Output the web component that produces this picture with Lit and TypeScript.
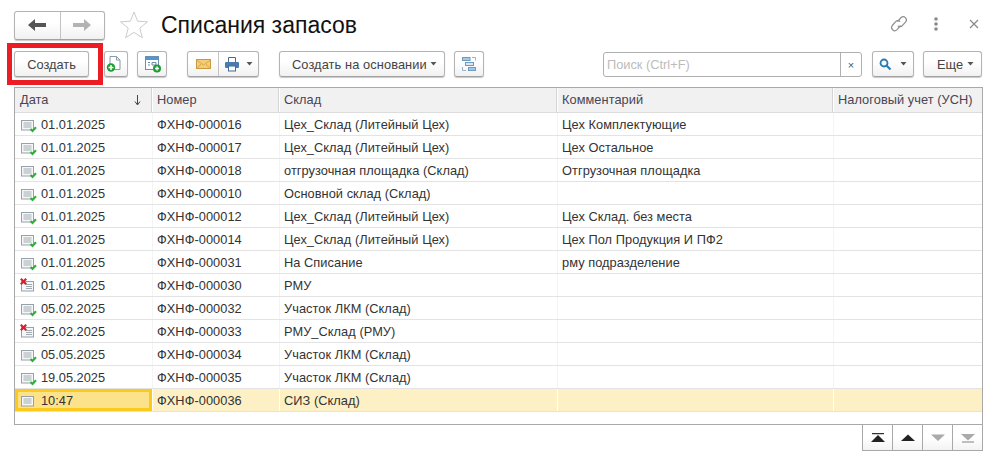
import { LitElement, html, css, svg } from "lit";
import { customElement } from "lit/decorators.js";

type Row = [number, string, string, string, string];
const rows: Row[] = [
  [1, "01.01.2025", "ФХНФ-000016", "Цех_Склад (Литейный Цех)", "Цех Комплектующие"],
  [1, "01.01.2025", "ФХНФ-000017", "Цех_Склад (Литейный Цех)", "Цех Остальное"],
  [1, "01.01.2025", "ФХНФ-000018", "отгрузочная площадка (Склад)", "Отгрузочная площадка"],
  [1, "01.01.2025", "ФХНФ-000010", "Основной склад (Склад)", ""],
  [1, "01.01.2025", "ФХНФ-000012", "Цех_Склад (Литейный Цех)", "Цех Склад. без места"],
  [1, "01.01.2025", "ФХНФ-000014", "Цех_Склад (Литейный Цех)", "Цех Пол Продукция И ПФ2"],
  [1, "01.01.2025", "ФХНФ-000031", "На Списание", "рму подразделение"],
  [2, "01.01.2025", "ФХНФ-000030", "РМУ", ""],
  [1, "05.02.2025", "ФХНФ-000032", "Участок ЛКМ (Склад)", ""],
  [2, "25.02.2025", "ФХНФ-000033", "РМУ_Склад (РМУ)", ""],
  [1, "05.05.2025", "ФХНФ-000034", "Участок ЛКМ (Склад)", ""],
  [1, "19.05.2025", "ФХНФ-000035", "Участок ЛКМ (Склад)", ""],
];

const docIcon = (state: number) => svg`<svg class="doc" width="20" height="16" viewBox="0 0 20 16">
  <rect x="1.5" y="3.5" width="12" height="9.5" fill="#f4f6f7" stroke="#97a1a9"/>
  <path d="${state === 2 ? "M6 6.5h6M6 8.5h6M6 10.5h6" : "M3.5 6h8M3.5 8h8M3.5 10h8"}" stroke="#a3abb1" fill="none"/>
  ${state === 1 ? svg`<path d="M10.5 12l2 2 3.5-3.8" stroke="#2fae3a" stroke-width="2" fill="none"/>` : ""}
  ${state === 2 ? svg`<path d="M.8 .8l5.4 5.4M6.2 .8L.8 6.2" stroke="#d8202c" stroke-width="2.2" fill="none"/>` : ""}
</svg>`;

const caret = html`<svg class="caret" width="7" height="4" viewBox="0 0 7 4"><path d="M.5 0h6L3.5 3.5z" fill="#555"/></svg>`;

@customElement("app-root")
export class AppRoot extends LitElement {
  static styles = css`
    :host { display: block; width: 1002px; height: 466px; background: #fff; font: 12.8px "Liberation Sans", Arial, sans-serif; color: #333; position: relative; overflow: hidden; }
    .page { display: flex; flex-direction: column; padding: 10px 19px 0 14px; }
    .head { display: flex; align-items: center; height: 30px; }
    .btn { display: inline-flex; align-items: center; justify-content: center; box-sizing: border-box; height: 26px; border: 1px solid #b4b4b4; border-bottom-color: #a2a2a2; border-radius: 3px; background: linear-gradient(#fff 40%, #f1f1f1); box-shadow: 0 1px 1px #c8c8c8; color: #444; white-space: nowrap; }
    .nav { display: flex; width: 91px; height: 29px; }
    .nav span { display: flex; align-items: center; justify-content: center; height: 100%; width: 45px; }
    .nav span + span { border-left: 1px solid #c4c4c4; width: 44px; }
    .star { margin-left: 14px; display: block; }
    h1 { margin: 0 0 0 12px; font-size: 23px; font-weight: 400; color: #111; line-height: 30px; flex: 1; }
    .tools { display: flex; align-items: center; padding-right: 4px; margin-top: -2px; }
    .tools svg { display: block; }
    .tools .dots { margin-left: 25px; }
    .tools .close { margin-left: 31px; }
    .bar { display: flex; align-items: center; margin-top: 11px; height: 26px; }
    .bar svg { overflow: visible; }
    .new { width: 75px; }
    .b2 { width: 24px; margin-left: 15px; }
    .b3 { width: 30px; margin-left: 9px; }
    .group { width: 72px; margin-left: 20px; padding: 0; }
    .group span { display: flex; align-items: center; justify-content: center; height: 100%; }
    .group .m { width: 30px; border-right: 1px solid #c4c4c4; }
    .group .p { flex: 1; gap: 6px; }
    .based { width: 166px; margin-left: 20px; gap: 3px; justify-content: flex-start; padding-left: 12px; letter-spacing: .1px; }
    .b6 { width: 30px; margin-left: 9px; }
    .search { display: flex; width: 259px; height: 25px; margin-left: 119px; align-self: flex-end; box-sizing: border-box; border: 1px solid #b0b0b0; border-radius: 3px; background: #fff; }
    .search .ph { flex: 1; padding-left: 3px; line-height: 23px; color: #bcbcbc; }
    .search .x { width: 20px; border-left: 1px solid #b0b0b0; display: flex; align-items: center; justify-content: center; color: #555; font-size: 11px; }
    .b8 { width: 42px; margin-left: 10px; gap: 8px; }
    .more { width: 59px; margin-left: 9px; gap: 4px; justify-content: flex-start; padding-left: 13px; }
    .table { margin-top: 10px; height: 338px; box-sizing: border-box; border: 1px solid #a8a8a8; }
    .row { display: grid; grid-template-columns: 137px 127px 278px 276px 1fr; height: 23px; box-sizing: border-box; border-bottom: 1px solid #e3e3e3; }
    .row > div { padding-left: 4px; line-height: 24px; white-space: nowrap; overflow: hidden; letter-spacing: .05px; }
    .row > div + div { border-left: 1px solid #f4f4f4; }
    .row.top { height: 25px; background: #f1f1f1; border-bottom: 1px solid #dcdcdc; color: #4b4453; }
    .row.top > div { line-height: 24px; }
    .row.top > div + div { border-left: 1px solid #fff; box-shadow: -1px 0 0 #d4d4d4; }
    .row.top .date { display: flex; justify-content: space-between; padding-left: 5px; padding-right: 11px; align-items: center; }
    .row > .first { display: flex; align-items: center; padding-left: 5px; padding-top: 2px; box-sizing: border-box; letter-spacing: 0; line-height: 20px; }
    .doc { flex: none; margin-right: 1px; }
    .row.sel { background: #fdf0c4; }
    .row.sel > div + div { border-left: 1px solid #fff; }
    .row.sel > .first { background: #fde28c; outline: 3px solid #fcc91d; outline-offset: -3px; }
    .pager { align-self: flex-end; display: flex; height: 26px; box-sizing: border-box; border: 1px solid #a8a8a8; border-top: 0; background: linear-gradient(#fff 50%, #f3f3f3); }
    .pager span { width: 29px; display: flex; align-items: center; justify-content: center; }
    .pager span + span { border-left: 1px solid #a8a8a8; }
    .mark { position: absolute; left: 7px; top: 43px; width: 96px; height: 42px; box-sizing: border-box; border: 5px solid #ec1c24; pointer-events: none; }
  `;

  render() {
    return html`
      <div class="page">
        <div class="head">
          <div class="btn nav">
            <span><svg width="18" height="14" viewBox="0 0 18 14"><path d="M0 7l7-6v4h11v4H7v4z" fill="#555"/></svg></span>
            <span><svg width="18" height="14" viewBox="0 0 18 14"><path d="M18 7l-7-6v4H0v4h11v4z" fill="#b3b3b3"/></svg></span>
          </div>
          <svg class="star" width="30" height="30" viewBox="0 0 30 30"><path d="M15 2l3.6 9.2 9.9.6-7.7 6.3 2.5 9.6-8.3-5.3-8.3 5.3 2.5-9.6L1.5 11.8l9.9-.6z" fill="#fff" stroke="#c9cdd1"/></svg>
          <h1>Списания запасов</h1>
          <div class="tools">
            <svg width="20" height="20" viewBox="0 0 20 20" fill="none" stroke="#8f8f8f" stroke-width="1.2"><path d="M8.5 7.5l3.6-4a3.2 3.2 0 0 1 4.6 4.4l-3.4 3.8a3 3 0 0 1-4.4.1"/><path d="M11.5 11.5l-3.6 4.4a3.2 3.2 0 0 1-4.6-4.4l3.4-3.8a3 3 0 0 1 4.4-.1"/></svg>
            <svg class="dots" width="4" height="16" viewBox="0 0 4 16"><g fill="#8a8a8a"><circle cx="2" cy="3" r="1.8"/><circle cx="2" cy="8" r="1.8"/><circle cx="2" cy="13" r="1.8"/></g></svg>
            <svg class="close" width="10" height="10" viewBox="0 0 10 10"><path d="M1 1l8 8M9 1L1 9" stroke="#888" stroke-width="1.2"/></svg>
          </div>
        </div>
        <div class="bar">
          <div class="btn new">Создать</div>
          <div class="btn b2"><svg width="18" height="20" viewBox="2 0 18 20"><path d="M5 2.5h6.5l3.5 3.5v9.5H5z" fill="#fff" stroke="#8a9aa8"/><path d="M11.5 2.5V6H15" fill="none" stroke="#8a9aa8"/><circle cx="6" cy="13.5" r="4.2" fill="#1f9d35"/><path d="M6 11v5M3.5 13.5h5" stroke="#fff" stroke-width="1.5"/></svg></div>
          <div class="btn b3"><svg width="20" height="20" viewBox="0 0 20 20"><rect x="3.5" y="2.5" width="13" height="13" fill="#fff" stroke="#6d8faf"/><rect x="4" y="3" width="12" height="3" fill="#4a9ad8"/><path d="M6 8.5h2M6 11h2M10 8.5h4v2.5h-4z" fill="none" stroke="#6d8faf"/><circle cx="15" cy="14.5" r="4" fill="#1f9d35"/><path d="M15 12.5v4M13 14.5h4" stroke="#fff" stroke-width="1.4"/></svg></div>
          <div class="btn group">
            <span class="m"><svg width="15" height="10" viewBox="0 0 15 10"><rect x=".5" y=".5" width="14" height="9" fill="#f4cc78" stroke="#c89a3c"/><path d="M.5 1l7 5 7-5M1 9.5l4.5-5M14 9.5l-4.5-5" fill="none" stroke="#d9a94c"/></svg></span>
            <span class="p"><svg width="16" height="16" viewBox="0 0 16 16"><path d="M4.5 6V1.5h7V6" fill="#fff" stroke="#3f6d9a"/><rect x="1" y="6" width="14" height="6" rx="1" fill="#4a7cac"/><rect x="4.5" y="10" width="7" height="5" fill="#fff" stroke="#3f6d9a"/></svg>${caret}</span>
          </div>
          <div class="btn based">Создать на основании ${caret}</div>
          <div class="btn b6"><svg width="14" height="14" viewBox="0 0 14 14"><path d="M10 .5h3.5v3M.5 10v3.5H4" fill="none" stroke="#8db4d4"/><rect x=".5" y=".5" width="7.5" height="3" fill="#a9c7e0" stroke="#6d9cc2"/><rect x="3.5" y="5.5" width="8" height="3" fill="#dbe8f3" stroke="#6d9cc2"/><rect x="6.5" y="10.5" width="7" height="3" fill="#a9c7e0" stroke="#6d9cc2"/></svg></div>
          <div class="search"><div class="ph">Поиск (Ctrl+F)</div><div class="x">×</div></div>
          <div class="btn b8"><svg width="13" height="13" viewBox="0 0 13 13"><circle cx="5" cy="5" r="3.5" fill="none" stroke="#2a7ab0" stroke-width="1.8"/><path d="M7.5 7.5l4 4" stroke="#2a7ab0" stroke-width="2.2"/></svg>${caret}</div>
          <div class="btn more">Еще ${caret}</div>
        </div>
        <div class="table">
          <div class="row top">
            <div class="date">Дата <svg width="7" height="11" viewBox="0 0 7 11"><path d="M3.5 0v9M1 6.5l2.5 3.5L6 6.5" fill="none" stroke="#444"/></svg></div>
            <div>Номер</div><div>Склад</div><div>Комментарий</div><div>Налоговый учет (УСН)</div>
          </div>
          ${rows.map(r => html`<div class="row">
            <div class="first">${docIcon(r[0])}<span>${r[1]}</span></div>
            <div>${r[2]}</div><div>${r[3]}</div><div>${r[4]}</div><div></div>
          </div>`)}
          <div class="row sel">
            <div class="first">${docIcon(0)}<span>10:47</span></div>
            <div>ФХНФ-000036</div><div>СИЗ (Склад)</div><div></div><div></div>
          </div>
        </div>
        <div class="pager">
          <span><svg width="14" height="10" viewBox="0 0 14 10"><path d="M1 .5h12" stroke="#333" stroke-width="1.5"/><path d="M0 9l7-7 7 7z" fill="#222"/></svg></span>
          <span><svg width="14" height="8" viewBox="0 0 14 8"><path d="M0 7l7-6.5L14 7z" fill="#222"/></svg></span>
          <span><svg width="14" height="8" viewBox="0 0 14 8"><path d="M0 .5l7 6.5L14 .5z" fill="#aaa"/></svg></span>
          <span><svg width="14" height="10" viewBox="0 0 14 10"><path d="M0 1l7 6.5L14 1z" fill="#aaa"/><path d="M1 9h12" stroke="#aaa" stroke-width="1.5"/></svg></span>
        </div>
      </div>
      <div class="mark"></div>
    `;
  }
}
